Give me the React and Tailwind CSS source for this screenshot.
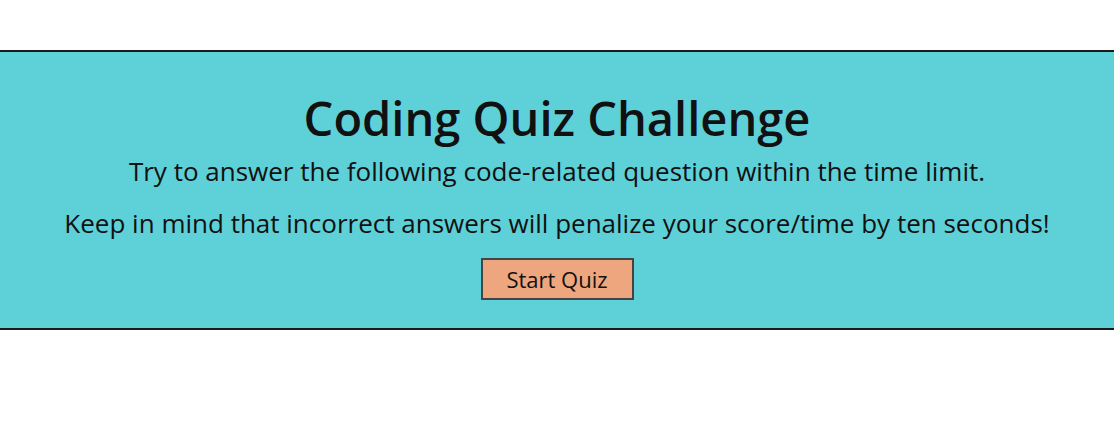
export default function App() {
  return (
    <div className="w-[1114px] h-[440px] bg-white pt-[50px]" style={{ fontFamily: '"Open Sans", sans-serif' }}>
      <div className="border-y-2 border-[#1a1a1a] bg-[#5ed0d8] h-[280px] flex flex-col items-center text-[#111]">
        <h1 className="mt-[38px] text-[47px] leading-[56px] font-semibold">Coding Quiz Challenge</h1>
        <p className="text-[26px] leading-[32px] mt-[9px]">Try to answer the following code-related question within the time limit.</p>
        <p className="text-[26px] leading-[32px] mt-[20px]">Keep in mind that incorrect answers will penalize your score/time by ten seconds!</p>
        <button className="mt-[19px] w-[153px] h-[42px] bg-[#eda67d] border-2 border-[#444] text-[22px] leading-none text-[#111]">Start Quiz</button>
      </div>
    </div>
  );
}
